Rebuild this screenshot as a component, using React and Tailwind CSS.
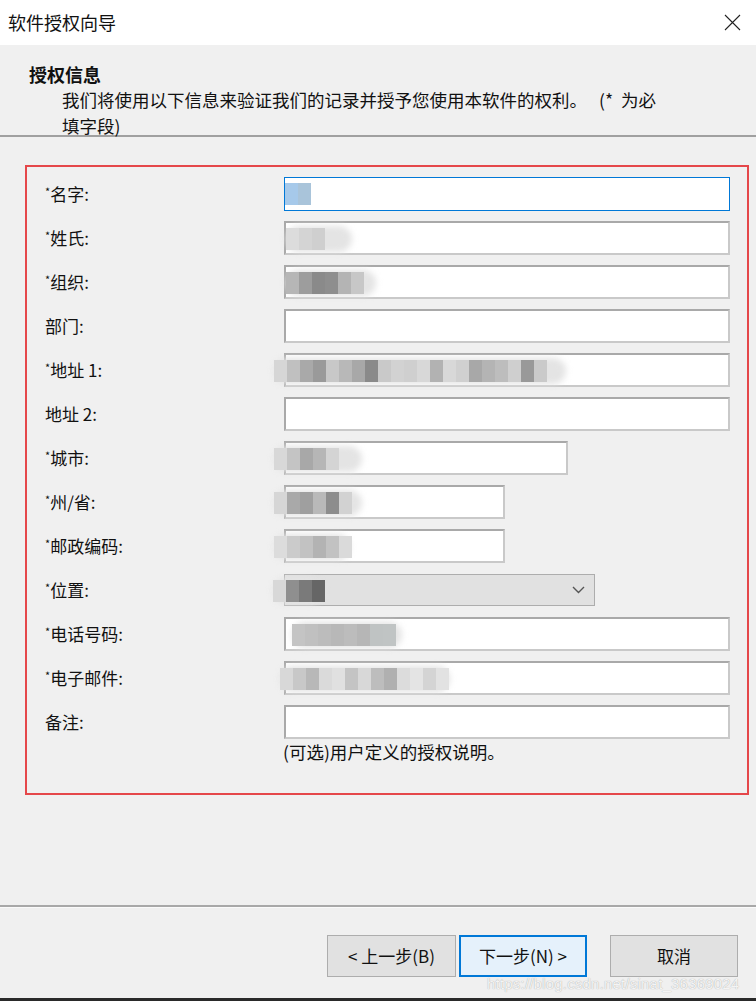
import React from "react";

const F = { fontFamily: '"Noto Sans CJK SC", "Noto Sans", sans-serif' };

function Mosaic({ blocks, left = -12, smear = 0 }) {
  return (
    <div className="pointer-events-none absolute top-[5px] flex items-center" style={{ left }}>
      {smear > 0 && (
        <div className="absolute left-0 top-[-2px] h-[26px] rounded-full bg-[#e4e4e4] blur-[3px]" style={{ width: smear }} />
      )}
      <div className="relative flex blur-[0.6px]">
        {blocks.map((c, i) => (
          <div key={i} className="h-[22px] w-[13px]" style={{ backgroundColor: c }} />
        ))}
      </div>
    </div>
  );
}

function Field({ width = "w-[446px]", focus, blocks, left, smear }) {
  return (
    <div
      className={`relative h-[34px] ${width} bg-white ${
        focus ? "border border-[#0078d7]" : "border-2 border-[#a9a9a9] border-r-[#c9c9c9] border-b-[#c9c9c9]"
      }`}
    >
      {blocks && <Mosaic blocks={blocks} left={left} smear={smear} />}
    </div>
  );
}

function Label({ req, children }) {
  return (
    <div className="w-[239px] shrink-0 text-[17px] text-[#111]" style={F}>
      {req && <span className="relative top-[-5px] text-[11px]">*</span>}
      {children}
    </div>
  );
}

function Row({ req, label, children }) {
  return (
    <div className="flex h-[33px] items-center">
      <Label req={req}>{label}</Label>
      {children}
    </div>
  );
}

export default function App() {
  return (
    <div className="relative flex h-[1001px] w-[756px] flex-col overflow-hidden bg-[#f0f0f0]" style={F}>
      {/* title bar */}
      <div className="flex h-[45px] shrink-0 items-center justify-between bg-white pl-[8px] pr-[14px]">
        <span className="text-[18px] text-[#111]">软件授权向导</span>
        <svg width="17" height="17" viewBox="0 0 17 17" className="mr-[1px]">
          <path d="M1 1 L16 16 M16 1 L1 16" stroke="#222" strokeWidth="1.1" fill="none" />
        </svg>
      </div>

      {/* header */}
      <div className="h-[92px] shrink-0 border-b-2 border-[#a0a0a0] pl-[29px] pt-[16px] leading-[26px] text-[#111]">
        <div className="text-[18px] font-bold">授权信息</div>
        <div className="pl-[33px] text-[17.5px]">
          我们将使用以下信息来验证我们的记录并授予您使用本软件的权利。<span className="ml-[12px]">(*</span>
          <span className="ml-[8px]">为必</span>
          <br />
          填字段)
        </div>
      </div>

      {/* content */}
      <div className="px-[25px] pt-[28px]">
        <div className="h-[630px] w-[724px] border-2 border-[#e5474a] pl-[18px] pt-[10px]">
          <div className="flex flex-col gap-[11px]">
            <Row req label="名字:">
              <Field focus blocks={["#a6c9ea", "#a9c4da"]} left={0} smear={0} />
            </Row>
            <Row req label="姓氏:">
              <Field blocks={["#dcdcdc", "#d4d4d4", "#cfcfcf"]} left={0} smear={66} />
            </Row>
            <Row req label="组织:">
              <Field blocks={["#b6b6b6", "#9d9d9d", "#8a8a8a", "#8e8e8e", "#b4b4b4", "#c7c7c7"]} left={0} smear={90} />
            </Row>
            <Row label="部门:">
              <Field />
            </Row>
            <Row req label="地址 1:">
              <Field
                blocks={["#d6d6d6", "#c0c0c0", "#a9a9a9", "#9a9a9a", "#c8c8c8", "#b8b8b8", "#a8a8a8", "#8a8a8a", "#c9c9c9", "#d2d2d2", "#cfcfcf", "#d8d8d8", "#b2b2b2", "#d8d8d8", "#d0d0d0", "#a8a8a8", "#b4b4b4", "#bdbdbd", "#cfcfcf", "#999", "#cacaca"]}
                left={-12}
                smear={292}
              />
            </Row>
            <Row label="地址 2:">
              <Field />
            </Row>
            <Row req label="城市:">
              <Field width="w-[284px]" blocks={["#d8d8d8", "#c4c4c4", "#a8a8a8", "#b6b6b6", "#d4d4d4"]} left={-12} smear={88} />
            </Row>
            <Row req label="州/省:">
              <Field width="w-[221px]" blocks={["#d6d6d6", "#a9a9a9", "#9f9f9f", "#b9b9b9", "#8d8d8d", "#d2d2d2"]} left={-12} smear={88} />
            </Row>
            <Row req label="邮政编码:">
              <Field width="w-[221px]" blocks={["#dcdcdc", "#cbcbcb", "#c2c2c2", "#b3b3b3", "#c2c2c2", "#dadada"]} left={-12} smear={76} />
            </Row>
            <Row req label="位置:">
              <div className="relative flex h-[32px] w-[311px] items-center justify-end border border-[#adadad] bg-[#e1e1e1] pr-[9px]">
                <Mosaic blocks={["#d8d8d8", "#8f8f8f", "#7a7a7a", "#666"]} left={-12} smear={50} />
                <svg width="13" height="8" viewBox="0 0 13 8">
                  <path d="M1 1 L6.5 6.5 L12 1" stroke="#555" strokeWidth="1.4" fill="none" />
                </svg>
              </div>
            </Row>
            <Row req label="电话号码:">
              <Field blocks={["#c4c4c4", "#c0c0c0", "#bcbcbc", "#b8b8b8", "#bcbcbc", "#b6b6b6", "#bfc3c3", "#c0c4c4"]} left={6} smear={110} />
            </Row>
            <Row req label="电子邮件:">
              <Field
                blocks={["#d8d8d8", "#c8c8c8", "#b8b8b8", "#dadada", "#e0e0e0", "#c4c4c4", "#d8d8d8", "#bdbdbd", "#b0b0b0", "#dcdcdc", "#e4e4e4", "#d4d4d4", "#e2e2e2"]}
                left={-6}
                smear={170}
              />
            </Row>
            <Row label="备注:">
              <Field />
            </Row>
          </div>
          <div className="ml-[238px] mt-[1px] text-[17.5px] leading-[26px] text-[#111]">(可选)用户定义的授权说明。</div>
        </div>
      </div>

      {/* footer */}
      <div className="mt-[110px] border-t-2 border-[#a8a8a8] shadow-[0_1px_0_#fafafa]" />
      <div className="flex justify-end pr-[18px] pt-[28px]">
        <button className="h-[42px] w-[129px] border border-[#adadad] bg-[#e1e1e1] text-[17px] text-[#111]" style={F}>
          &lt; 上一步(B)
        </button>
        <button className="ml-[3px] h-[42px] w-[128px] border-2 border-[#0078d7] bg-[#e5f1fb] text-[17px] text-[#111]" style={F}>
          下一步(N) &gt;
        </button>
        <button className="ml-[23px] h-[42px] w-[128px] border border-[#adadad] bg-[#e1e1e1] text-[17px] text-[#111]" style={F}>
          取消
        </button>
      </div>
      <div className="absolute bottom-0 left-0 h-[3px] w-full bg-[#2a2a2a]" />
      <div
        className="pointer-events-none absolute bottom-[6px] left-[487px] text-[15px] tracking-[0.2px] text-[#f4f4f4] [text-shadow:0_0_1px_#9a9a9a]"
        style={{ fontFamily: '"Liberation Sans", Arial, sans-serif' }}
      >
        https://blog.csdn.net/sinat_36369024
      </div>
    </div>
  );
}
